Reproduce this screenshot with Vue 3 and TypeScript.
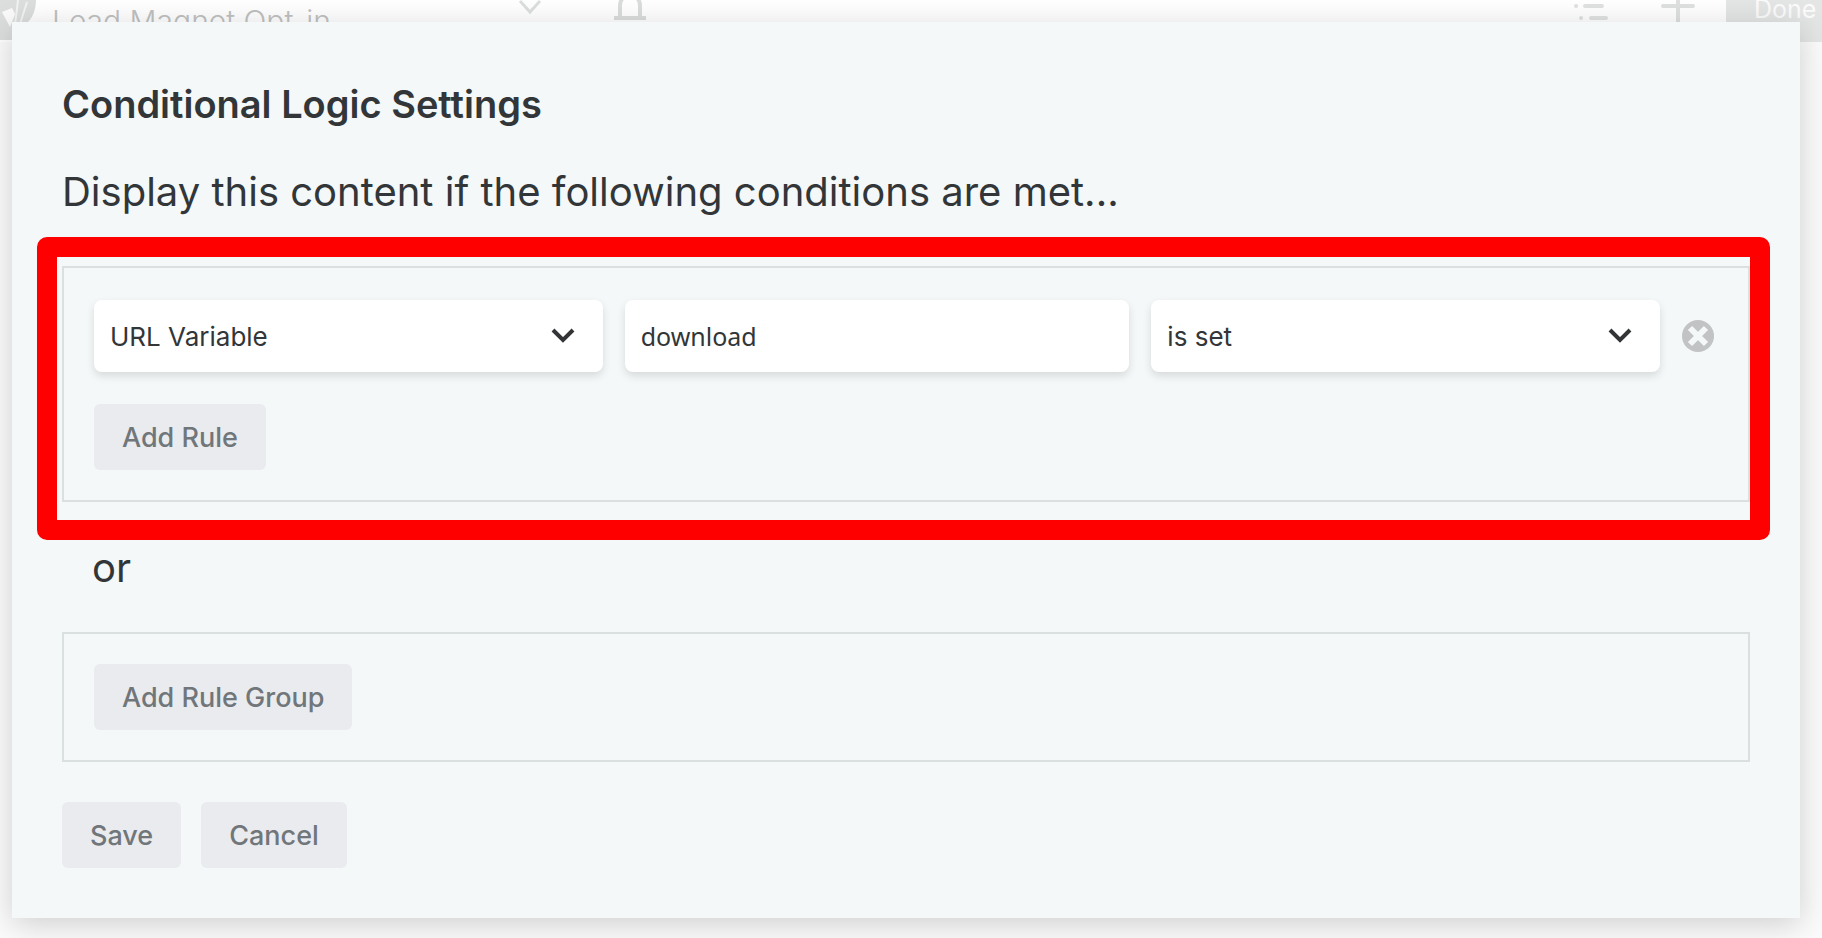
<script setup lang="ts">
import { ref } from 'vue'

const variable = ref('URL Variable')
const variableName = ref('download')
const operator = ref('is set')

const variables: string[] = ['URL Variable', 'Post Title', 'User Login']
const operators: string[] = ['is set', 'is not set', 'equals']
</script>

<template>
  <div class="page">
    <header class="topbar" aria-hidden="true">
      <svg class="logo" width="36" height="44" viewBox="0 0 36 44">
        <path d="M0 0H36C36 9 33 17 28 22L12 40H0Z" fill="#dcdedd" />
        <path d="M2 12L12 8L15 14L10 27Z" fill="#fafafa" />
        <path d="M18 0L15 25M27 2L20 24" stroke="#f1f2f2" stroke-width="2" fill="none" />
      </svg>
      <span class="page-name">Lead Magnet Opt-in</span>
      <svg class="caret" width="24" height="16" viewBox="0 0 24 16">
        <path d="M2 1L12 12L22 1" fill="none" stroke="#dddfdf" stroke-width="3" />
      </svg>
      <svg class="bell" width="32" height="22" viewBox="0 0 32 22">
        <path d="M6 17V6C6 2 8-2 11-4H21C24-2 26 2 26 6V17" fill="none" stroke="#dbdddd" stroke-width="4" />
        <path d="M0 18H32" stroke="#dbdddd" stroke-width="4" />
      </svg>
      <svg class="outline" width="36" height="22" viewBox="0 0 36 22">
        <g stroke="#e0e2e2" stroke-width="4" stroke-linecap="round">
          <path d="M3 6H3.1M12 6H29M8 18H8.1M18 18H33" />
        </g>
      </svg>
      <svg class="plus" width="34" height="22" viewBox="0 0 34 22">
        <path d="M2 6H32M17 0V22" stroke="#dfe1e1" stroke-width="4" stroke-linecap="round" />
      </svg>
      <span class="done">Done</span>
    </header>

    <main class="modal" role="dialog" aria-labelledby="dialog-title">
      <h1 id="dialog-title">Conditional Logic Settings</h1>
      <p class="intro">Display this content if the following conditions are met...</p>

      <section class="group">
        <div class="rule">
          <div class="select">
            <select v-model="variable" aria-label="Rule type">
              <option v-for="item in variables" :key="item">{{ item }}</option>
            </select>
            <svg width="24" height="16" viewBox="0 0 24 16">
              <path d="M2 2L12 12L22 2" />
            </svg>
          </div>
          <input v-model="variableName" class="name" type="text" aria-label="Variable name" />
          <div class="select">
            <select v-model="operator" aria-label="Operator">
              <option v-for="item in operators" :key="item">{{ item }}</option>
            </select>
            <svg width="24" height="16" viewBox="0 0 24 16">
              <path d="M2 2L12 12L22 2" />
            </svg>
          </div>
          <button class="remove" type="button" aria-label="Remove rule">
            <svg width="32" height="32" viewBox="0 0 32 32">
              <circle cx="16" cy="16" r="16" fill="#c1c3c4" />
              <path d="M8 8L24 24M24 8L8 24" stroke="#f4f8f9" stroke-width="6" />
            </svg>
          </button>
        </div>
        <button class="btn" type="button">Add Rule</button>
        <div class="highlight"></div>
      </section>

      <p class="or">or</p>

      <section class="group compact">
        <button class="btn" type="button">Add Rule Group</button>
      </section>

      <footer class="actions">
        <button class="btn" type="button">Save</button>
        <button class="btn" type="button">Cancel</button>
      </footer>
    </main>
  </div>
</template>

<style>
body {
  margin: 0;
}
</style>

<style scoped>
.page {
  display: grid;
  grid-template-columns: minmax(0, 1fr);
  min-height: 100vh;
  overflow: hidden;
  background: #fbfbfb;
  color: #323638;
  font-family: Inter, 'Liberation Sans', sans-serif;
}

.page * {
  box-sizing: border-box;
}

.topbar,
.modal {
  grid-area: 1 / 1;
}

.topbar {
  display: flex;
  align-items: flex-start;
  height: 42px;
  background: #ffffff;
}

.topbar svg {
  flex: none;
}

.page-name {
  width: 464px;
  margin-left: 16px;
  font-size: 30px;
  font-weight: 300;
  line-height: 42px;
  color: #bfc1c1;
  white-space: nowrap;
}

.caret {
  margin-left: 2px;
}

.bell {
  margin-left: 72px;
}

.outline {
  margin-left: auto;
}

.plus {
  margin-left: 52px;
}

.done {
  width: 96px;
  height: 42px;
  margin-left: 31px;
  padding-left: 28px;
  background: #e4e6e6;
  color: #fbfbfb;
  font-size: 25px;
  line-height: 18px;
}

.modal {
  z-index: 1;
  margin: 22px 22px 20px 12px;
  padding: 58px 50px 50px;
  background: #f4f8f9;
  box-shadow: 0 6px 30px rgba(0, 0, 0, 0.18);
}

h1 {
  margin: 0;
  font-size: 38px;
  font-weight: 600;
  line-height: 48px;
}

.intro,
.or {
  margin: 0;
  font-size: 40px;
  line-height: 60px;
}

.intro {
  margin-top: 34px;
}

.group {
  position: relative;
  margin-top: 44px;
  padding: 32px 30px 30px;
  border: 2px solid #dadfe0;
}

.group.compact {
  margin-top: 34px;
  padding-top: 30px;
}

.rule {
  display: grid;
  grid-template-columns: 508fr 504fr 508fr 36px;
  gap: 22px;
  margin-bottom: 32px;
}

.select {
  position: relative;
}

select,
.name {
  display: block;
  width: 100%;
  height: 72px;
  padding: 0 16px;
  border: 0;
  border-radius: 8px;
  background: #ffffff;
  box-shadow: 0 4px 8px rgba(0, 0, 0, 0.12);
  color: #323638;
  font: 400 26px Inter, 'Liberation Sans', sans-serif;
  appearance: none;
}

.name {
  font-family: 'Noto Sans', sans-serif;
  font-size: 25px;
}

.select svg {
  position: absolute;
  top: 28px;
  right: 28px;
  fill: none;
  stroke: #323435;
  stroke-width: 4;
  pointer-events: none;
}

.remove {
  display: grid;
  place-items: center start;
  padding: 0;
  border: 0;
  background: none;
}

.btn {
  height: 66px;
  padding: 0 28px;
  border: 0;
  border-radius: 6px;
  background: #e9ebee;
  color: #70767a;
  font: 500 27px Inter, 'Liberation Sans', sans-serif;
}

.highlight {
  position: absolute;
  inset: -31px -22px -40px -27px;
  border: 20px solid #ff0000;
  border-radius: 10px;
  pointer-events: none;
}

.or {
  margin-top: 36px;
  padding-left: 30px;
}

.actions {
  display: flex;
  gap: 20px;
  margin-top: 40px;
}
</style>
